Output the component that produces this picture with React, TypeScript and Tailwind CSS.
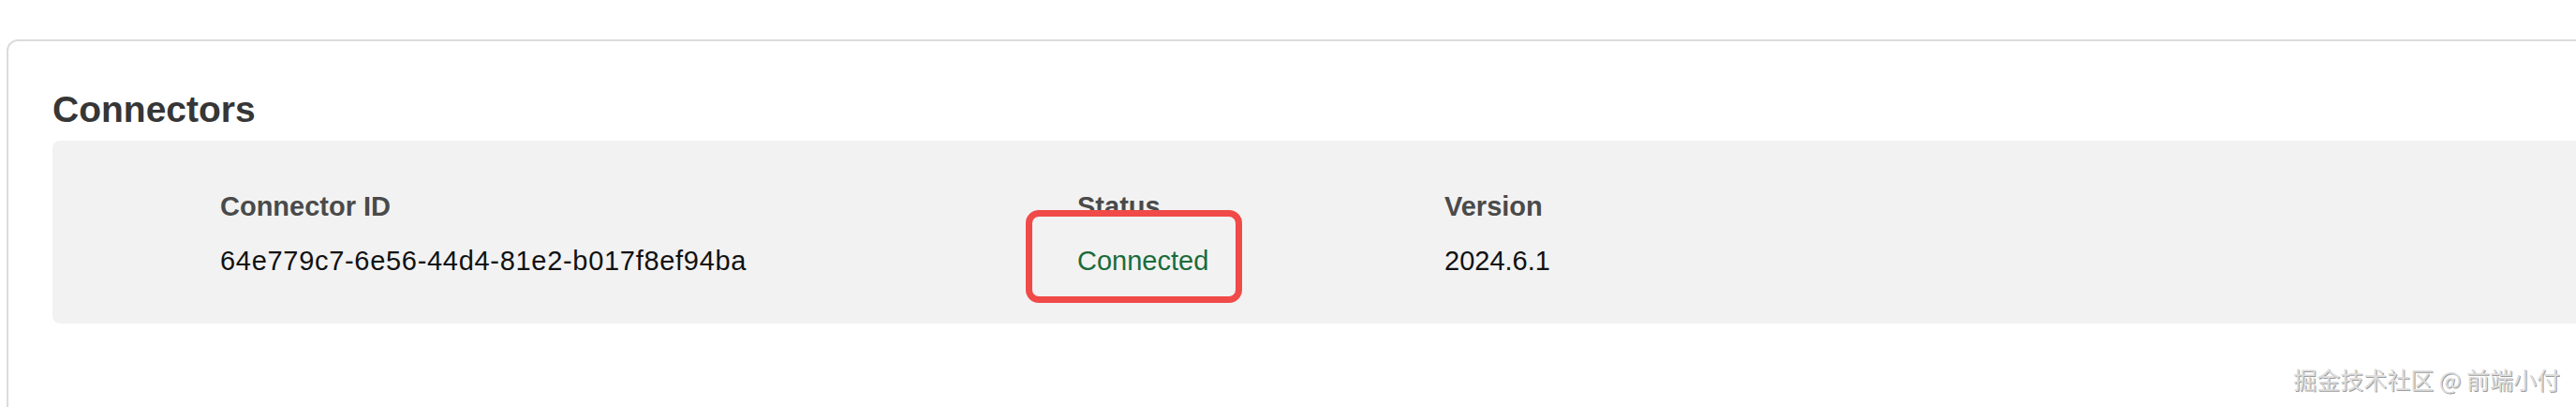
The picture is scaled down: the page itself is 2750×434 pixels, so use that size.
import React from "react";

const connectors = [
  {
    id: "64e779c7-6e56-44d4-81e2-b017f8ef94ba",
    status: "Connected",
    version: "2024.6.1",
  },
];

const App: React.FC = () => {
  return (
    <div className="relative w-[2750px] h-[434px] overflow-hidden bg-white font-['Liberation_Sans',Arial,sans-serif]">
      {/* Card */}
      <div className="ml-[7px] mt-[42px] w-[2800px] h-[440px] border-2 border-[#dcdcdc] rounded-tl-[12px] pl-[47px] pt-[50px]">
        <h2 className="text-[39px] leading-[46px] font-bold text-[#363636]">Connectors</h2>

        {/* Table */}
        <div className="mt-[10px] h-[195px] bg-[#f2f2f2] rounded-[8px] pl-[179px] pt-[53px]">
          <div className="grid grid-cols-[915px_392px_1fr] gap-y-[24px] text-[29px] leading-[34px]">
            <div className="font-bold text-[#4a4a4a]">Connector ID</div>
            <div className="relative font-bold text-[#4a4a4a]">
              Status
              {/* Annotation highlight */}
              <div className="absolute left-[-55px] top-[21px] w-[231px] h-[99px] border-[7px] border-[#f04b48] rounded-[14px] z-10" />
            </div>
            <div className="font-bold text-[#4a4a4a]">Version</div>
            {connectors.map((c) => (
              <React.Fragment key={c.id}>
                <div className="text-[#111] tracking-[0.7px]">{c.id}</div>
                <div className="text-[#1b6b3a]">{c.status}</div>
                <div className="text-[#111]">{c.version}</div>
              </React.Fragment>
            ))}
          </div>
        </div>
      </div>

      {/* Watermark */}
      <div className="absolute right-[17px] top-[388px] text-[25px] leading-[32px] text-[#dcdcdc] font-['Noto_Sans_CJK_SC',sans-serif] [text-shadow:1px_1px_0_rgba(0,0,0,0.4)]">
        掘金技术社区 @ 前端小付
      </div>
    </div>
  );
};

export default App;
